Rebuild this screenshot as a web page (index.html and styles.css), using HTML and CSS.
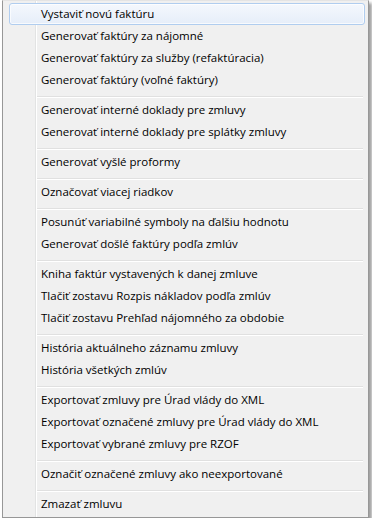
FILE: index.html
```html
<!DOCTYPE html>
<html lang="sk">
<head>
<meta charset="utf-8">
<title>Menu</title>
<link rel="stylesheet" href="styles.css">
</head>
<body>
<div class="menu">
  <div class="item active">Vystaviť novú faktúru</div>
  <div class="item">Generovať faktúry za nájomné</div>
  <div class="item">Generovať faktúry za služby (refaktúracia)</div>
  <div class="item">Generovať faktúry (voľné faktúry)</div>
  <div class="sep"></div>
  <div class="item">Generovať interné doklady pre zmluvy</div>
  <div class="item">Generovať interné doklady pre splátky zmluvy</div>
  <div class="sep"></div>
  <div class="item">Generovať vyšlé proformy</div>
  <div class="sep"></div>
  <div class="item">Označovať viacej riadkov</div>
  <div class="sep"></div>
  <div class="item">Posunúť variabilné symboly na ďalšiu hodnotu</div>
  <div class="item">Generovať došlé faktúry podľa zmlúv</div>
  <div class="sep"></div>
  <div class="item">Kniha faktúr vystavených k danej zmluve</div>
  <div class="item">Tlačiť zostavu Rozpis nákladov podľa zmlúv</div>
  <div class="item">Tlačiť zostavu Prehľad nájomného za obdobie</div>
  <div class="sep"></div>
  <div class="item">História aktuálneho záznamu zmluvy</div>
  <div class="item">História všetkých zmlúv</div>
  <div class="sep"></div>
  <div class="item">Exportovať zmluvy pre Úrad vlády do XML</div>
  <div class="item">Exportovať označené zmluvy pre Úrad vlády do XML</div>
  <div class="item">Exportovať vybrané zmluvy pre RZOF</div>
  <div class="sep"></div>
  <div class="item">Označiť označené zmluvy ako neexportované</div>
  <div class="sep"></div>
  <div class="item">Zmazať zmluvu</div>
</div>
</body>
</html>
```

FILE: styles.css
```css
html, body {
  margin: 0;
  padding: 0;
  background: #ffffff;
}

body {
  font-family: "Open Sans", "Noto Sans", "Liberation Sans", sans-serif;
  font-size: 11.5px;
  color: #000000;
}

.menu {
  box-sizing: border-box;
  width: 367px;
  margin-left: 2px;
  padding: 2px 3px 2px 6px;
  border: 1px solid #979797;
  border-top-color: #e4e4e4;
  background:
    linear-gradient(to right,
      transparent 32px,
      #e2e3e3 32px, #e2e3e3 33px,
      #ffffff 33px, #ffffff 34px,
      transparent 34px),
    #f0f0f0;
  box-shadow: 3px 3px 3px rgba(0, 0, 0, 0.38);
}

.item {
  box-sizing: border-box;
  height: 22px;
  line-height: 20px;
  padding-left: 31px;
  border: 1px solid transparent;
  border-radius: 3px;
  white-space: nowrap;
}

.item.active {
  border-color: #b0cdef;
  background: linear-gradient(to bottom, #f4f8fd, #e6eef9);
  box-shadow: inset 0 0 0 1px rgba(255, 255, 255, 0.7);
}

.sep {
  height: 8px;
  margin: 0 2px 0 28px;
  background: linear-gradient(to bottom,
    transparent 5px,
    #e0e0e0 5px, #e0e0e0 6px,
    #ffffff 6px, #ffffff 7px,
    transparent 7px);
}
```
